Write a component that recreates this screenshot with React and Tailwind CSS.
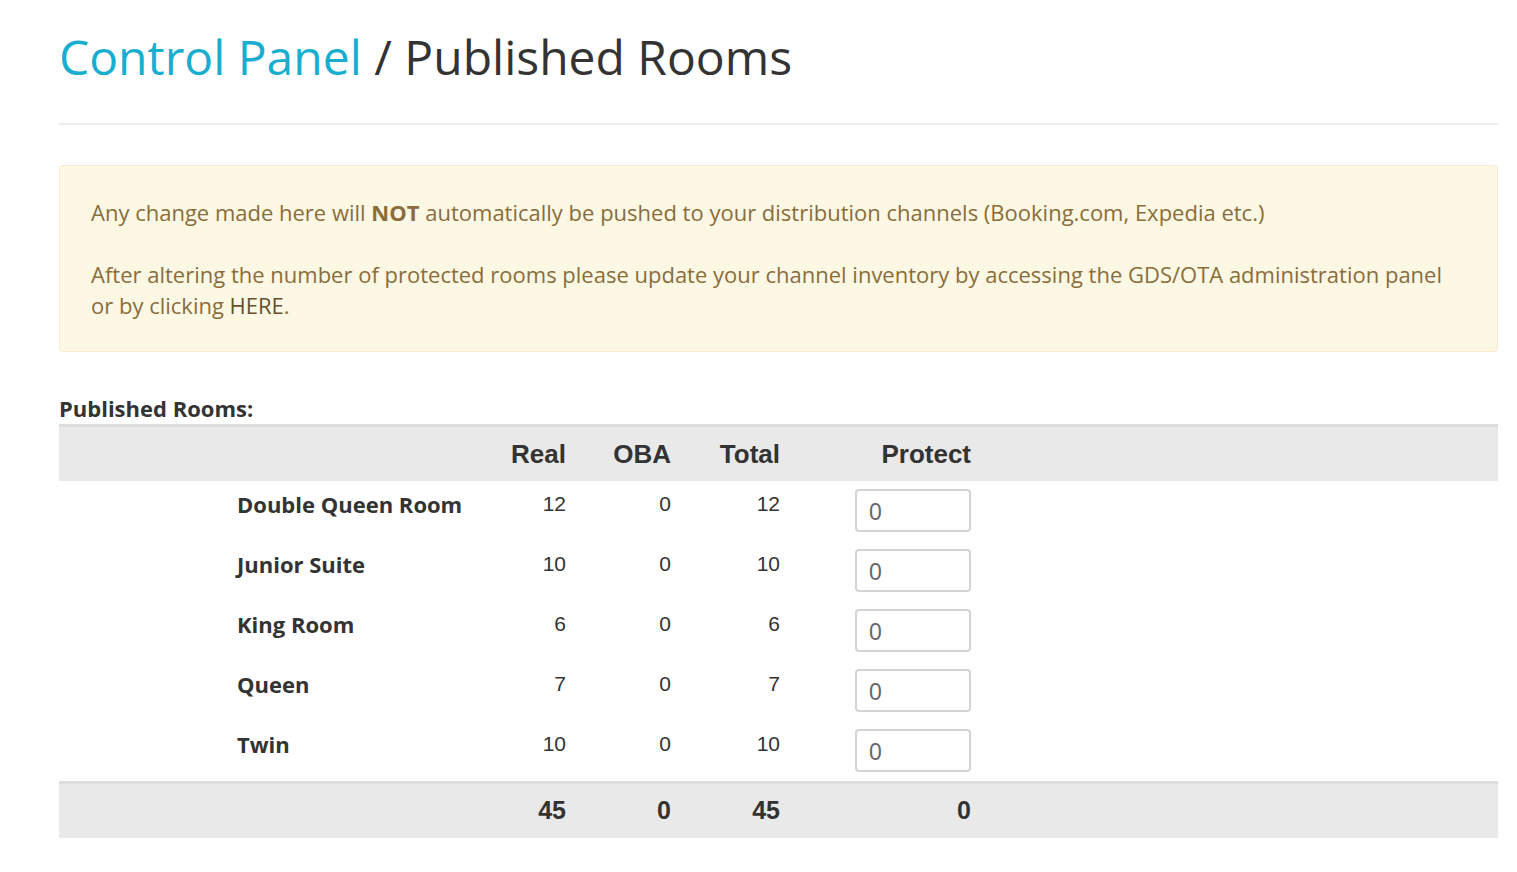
import React from "react";

const rooms = [
  { name: "Double Queen Room", real: 12, oba: 0, total: 12 },
  { name: "Junior Suite", real: 10, oba: 0, total: 10 },
  { name: "King Room", real: 6, oba: 0, total: 6 },
  { name: "Queen", real: 7, oba: 0, total: 7 },
  { name: "Twin", real: 10, oba: 0, total: 10 },
];

const cols = "grid grid-cols-[178px_250px_79px_105px_109px_191px_1fr]";

export default function App() {
  const sumReal = rooms.reduce((a, r) => a + r.real, 0);
  const sumTotal = rooms.reduce((a, r) => a + r.total, 0);

  return (
    <div className="min-h-screen bg-white pl-[59px] pr-[19px] pt-[27px] pb-10 font-['Open_Sans',sans-serif] text-[#333]">
      <h1 className="text-[48px] leading-[60px] font-normal">
        <span className="text-[#19aed0]">Control Panel</span> / Published Rooms
      </h1>

      <div className="mt-[36px] border-t-2 border-[#eee]" />

      <div className="mt-[40px] rounded border border-[#faebcc] bg-[#fcf8e3] px-[31px] pt-[31px] pb-[30px] text-[22px] leading-[31px] text-[#8a6d3b]">
        <p>
          Any change made here will <b>NOT</b> automatically be pushed to your distribution channels (Booking.com, Expedia etc.)
        </p>
        <p className="mt-[31px]">
          After altering the number of protected rooms please update your channel inventory by accessing the GDS/OTA administration panel
          or by clicking <span className="text-[#66512c]">HERE</span>.
        </p>
      </div>

      <h3 className="mt-[41px] text-[22px] leading-[30px] font-bold">Published Rooms:</h3>

      <div className="mt-[1px] font-['Liberation_Sans',Arial,sans-serif]">
        <div className={`${cols} h-[57px] items-center border-t-[3px] border-[#ddd] bg-[#e9e9e9] text-[26px] font-bold`}>
          <div />
          <div />
          <div className="text-right">Real</div>
          <div className="text-right">OBA</div>
          <div className="text-right">Total</div>
          <div className="text-right">Protect</div>
          <div />
        </div>

        {rooms.map((r) => (
          <div key={r.name} className={`${cols} h-[60px] pt-[8px] text-[21px] leading-[30px]`}>
            <div />
            <div className="font-['Open_Sans',sans-serif] text-[22px] font-bold">{r.name}</div>
            <div className="text-right">{r.real}</div>
            <div className="text-right">{r.oba}</div>
            <div className="text-right">{r.total}</div>
            <div className="flex justify-end">
              <input
                type="text"
                defaultValue="0"
                className="h-[43px] w-[116px] rounded border-2 border-[#d4d4d4] bg-white px-[12px] pt-[3px] text-[23px] text-[#666] outline-none"
              />
            </div>
            <div />
          </div>
        ))}

        <div className={`${cols} h-[57px] items-center border-t-[3px] border-[#ddd] bg-[#e9e9e9] text-[25px] font-bold`}>
          <div />
          <div />
          <div className="text-right">{sumReal}</div>
          <div className="text-right">0</div>
          <div className="text-right">{sumTotal}</div>
          <div className="text-right">0</div>
          <div />
        </div>
      </div>
    </div>
  );
}
